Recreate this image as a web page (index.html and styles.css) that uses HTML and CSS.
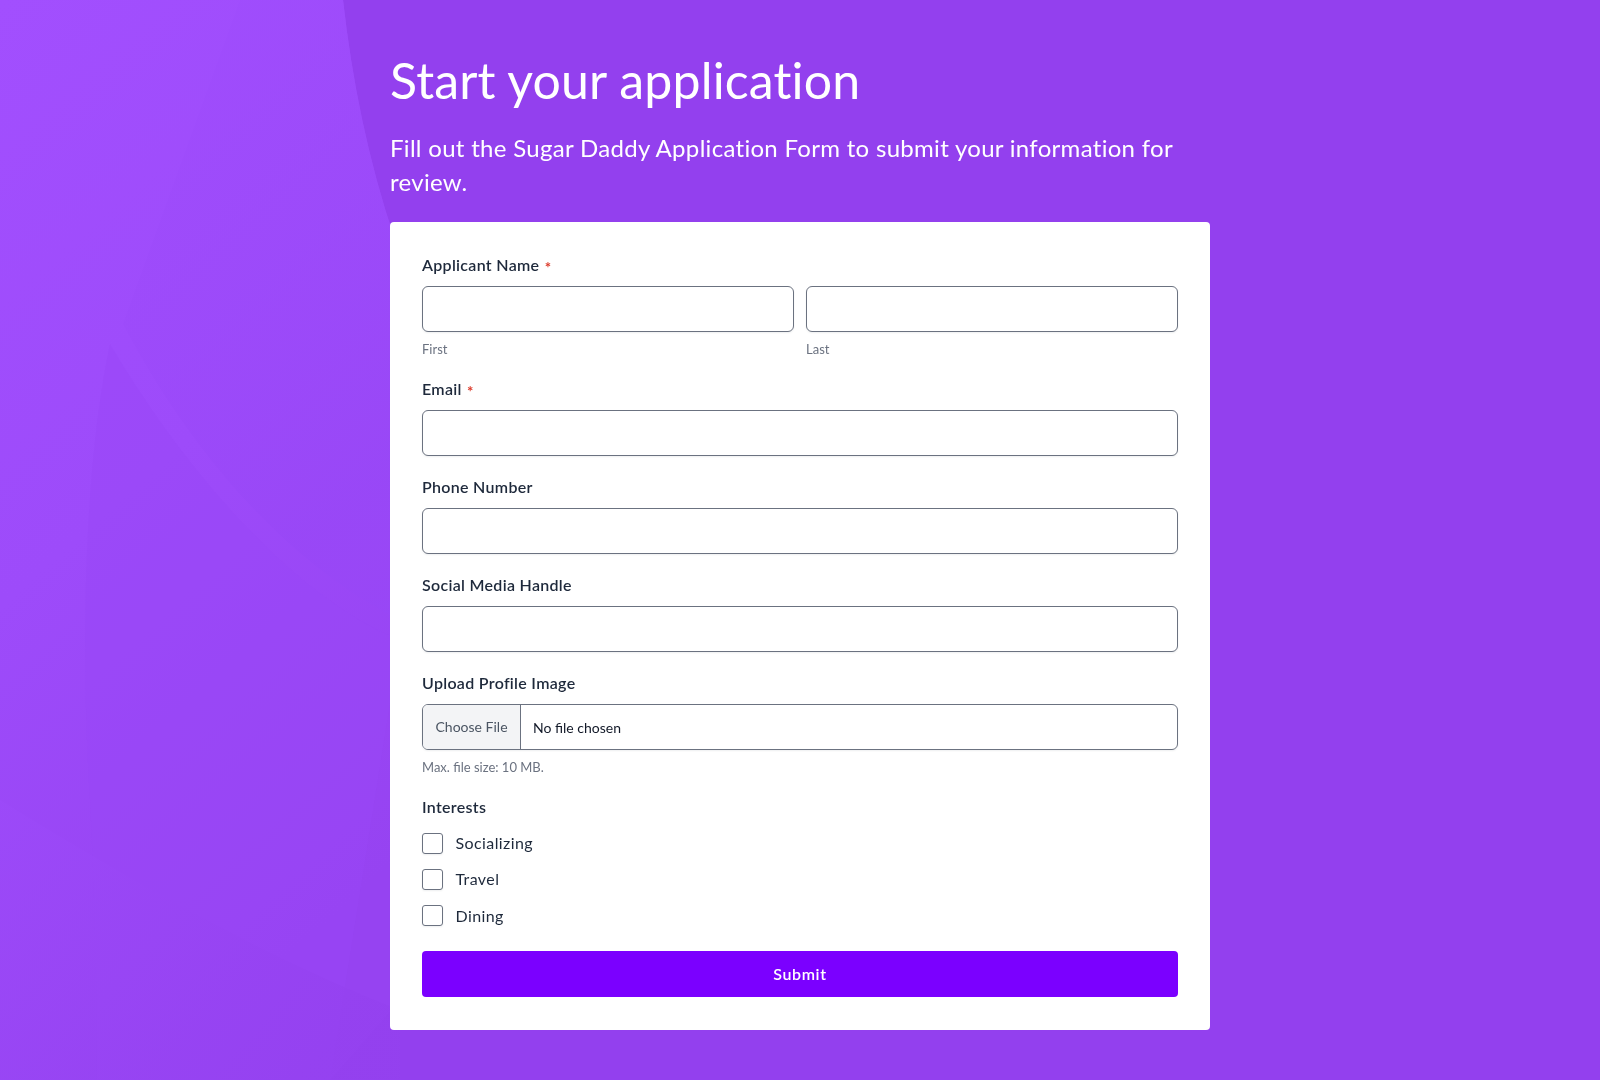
FILE: index.html
```html
<!DOCTYPE html>
<html lang="en">
<head>
<meta charset="utf-8">
<title>Start your application</title>
<link rel="stylesheet" href="styles.css">
</head>
<body>
<svg class="bg" viewBox="0 0 1600 1080" preserveAspectRatio="none" aria-hidden="true">
  <defs>
    <linearGradient id="gLeft" x1="0" y1="0" x2="0.35" y2="1">
      <stop offset="0" stop-color="#a24ffe"/>
      <stop offset="0.5" stop-color="#9d4bfa"/>
      <stop offset="1" stop-color="#9643f1"/>
    </linearGradient>
    <linearGradient id="gMid" x1="0" y1="0" x2="0.4" y2="1">
      <stop offset="0" stop-color="#a04dfd"/>
      <stop offset="1" stop-color="#9847f6"/>
    </linearGradient>
    <linearGradient id="gLow" x1="0" y1="0" x2="1" y2="0.6">
      <stop offset="0" stop-color="#9c4af9"/>
      <stop offset="1" stop-color="#9441ef"/>
    </linearGradient>
  </defs>
  <rect x="0" y="0" width="1600" height="1080" fill="#9340ee"/>
  <path d="M0,0 L343,0 C352,80 368,160 395,240 C430,420 440,760 400,1000 L330,1080 L0,1080 Z" fill="url(#gLeft)"/>
  <path d="M240,0 L343,0 C352,80 368,160 395,240 L400,620 C300,570 200,470 123,324 Z" fill="url(#gMid)" opacity="0.7"/>
  <path d="M110,344 C85,460 80,640 90,800 C95,900 97,1000 97,1080 L330,1080 L400,640 C300,600 190,480 110,344 Z" fill="#9a48f7" opacity="0.45"/>
  <path d="M0,800 C130,880 270,960 400,1010 L400,1080 L0,1080 Z" fill="url(#gLow)" opacity="0.7"/>
</svg>
<main class="page">
  <h1 class="title">Start your application</h1>
  <p class="subtitle">Fill out the Sugar Daddy Application Form to submit your information for review.</p>
  <form class="card">
    <div class="field">
      <div class="label">Applicant Name <span class="req">*</span></div>
      <div class="name-row">
        <div class="name-col">
          <input class="input" type="text" aria-label="First">
          <div class="hint">First</div>
        </div>
        <div class="name-col">
          <input class="input" type="text" aria-label="Last">
          <div class="hint">Last</div>
        </div>
      </div>
    </div>
    <div class="field">
      <div class="label">Email <span class="req">*</span></div>
      <input class="input" type="email" aria-label="Email">
    </div>
    <div class="field">
      <div class="label">Phone Number</div>
      <input class="input" type="tel" aria-label="Phone Number">
    </div>
    <div class="field">
      <div class="label">Social Media Handle</div>
      <input class="input" type="text" aria-label="Social Media Handle">
    </div>
    <div class="field">
      <div class="label">Upload Profile Image</div>
      <div class="file">
        <span class="file-btn">Choose File</span>
        <span class="file-name">No file chosen</span>
      </div>
      <div class="hint">Max. file size: 10 MB.</div>
    </div>
    <div class="field group">
      <div class="label group-label">Interests</div>
      <div class="checks">
        <label class="check-row"><input class="check" type="checkbox"><span>Socializing</span></label>
        <label class="check-row"><input class="check" type="checkbox"><span>Travel</span></label>
        <label class="check-row"><input class="check" type="checkbox"><span>Dining</span></label>
      </div>
    </div>
    <button class="submit" type="button">Submit</button>
  </form>
</main>
</body>
</html>
```
FILE: styles.css
```css
* { box-sizing: border-box; }

html, body {
  margin: 0;
  padding: 0;
}

body {
  min-height: 1080px;
  background: #9340ee;
  font-family: "Lato", "Noto Sans", sans-serif;
  overflow: hidden;
}

.bg {
  position: fixed;
  top: 0;
  left: 0;
  width: 100%;
  height: 100%;
  z-index: 0;
}

.page {
  position: relative;
  z-index: 1;
  width: 820px;
  margin: 0 auto;
  padding-top: 50px;
}

.title {
  margin: 0;
  font-size: 50px;
  line-height: 60px;
  font-weight: 400;
  letter-spacing: 0.15px;
  color: #ffffff;
}

.subtitle {
  margin: 21px 0 24px;
  font-size: 24px;
  line-height: 33.6px;
  font-weight: 400;
  letter-spacing: 0.3px;
  color: #ffffff;
}

.card {
  background: #ffffff;
  border-radius: 4px;
  padding: 32px 32px 33px;
}

.field {
  margin-bottom: 20.5px;
}

.field.group {
  margin-bottom: 23.2px;
}

.label {
  font-size: 16px;
  line-height: 22px;
  font-weight: 600;
  letter-spacing: 0.3px;
  color: #1e293b;
  margin-bottom: 9.5px;
}

.label.group-label {
  margin-bottom: 13px;
}

.req {
  color: #dc3b2b;
  font-size: 15px;
  font-weight: 700;
  line-height: 0;
  margin-left: 1px;
  vertical-align: -2px;
}

.name-row {
  display: grid;
  grid-template-columns: 1fr 1fr;
  gap: 12px;
}

.input {
  display: block;
  width: 100%;
  height: 46px;
  margin: 0;
  border: 1px solid #6b7280;
  border-radius: 6px;
  background: #ffffff;
  box-shadow: 0 1px 2px rgba(16, 24, 40, 0.07);
  font-family: inherit;
  font-size: 14px;
  padding: 0 12px;
}

.hint {
  margin-top: 8px;
  font-size: 13px;
  line-height: 18px;
  color: #6b7280;
}

.file {
  display: flex;
  align-items: stretch;
  height: 46px;
  border: 1px solid #6b7280;
  border-radius: 6px;
  overflow: hidden;
  box-shadow: 0 1px 2px rgba(16, 24, 40, 0.07);
  font-size: 14px;
}

.file-btn {
  display: flex;
  align-items: center;
  padding: 0 12.5px;
  background: #f3f4f6;
  border-right: 1px solid #6b7280;
  color: #4b5563;
}

.file-name {
  display: flex;
  align-items: center;
  padding-left: 12px;
  color: #111827;
  padding-top: 1px;
}

.checks {
  display: flex;
  flex-direction: column;
  gap: 12.3px;
}

.check-row {
  display: flex;
  align-items: center;
  gap: 12.5px;
  height: 24px;
  font-size: 16px;
  line-height: 24px;
  letter-spacing: 0.4px;
  color: #1e293b;
}

.check {
  appearance: none;
  -webkit-appearance: none;
  flex: none;
  width: 21px;
  height: 21px;
  margin: 0;
  border: 1px solid #6b7280;
  border-radius: 3px;
  background: #ffffff;
  box-shadow: 0 1px 2px rgba(16, 24, 40, 0.07);
}

.submit {
  display: block;
  width: 100%;
  height: 46px;
  border: none;
  border-radius: 4px;
  background: #7b00ff;
  color: #ffffff;
  font-family: inherit;
  font-size: 16px;
  font-weight: 600;
  letter-spacing: 0.6px;
  cursor: pointer;
}
```
